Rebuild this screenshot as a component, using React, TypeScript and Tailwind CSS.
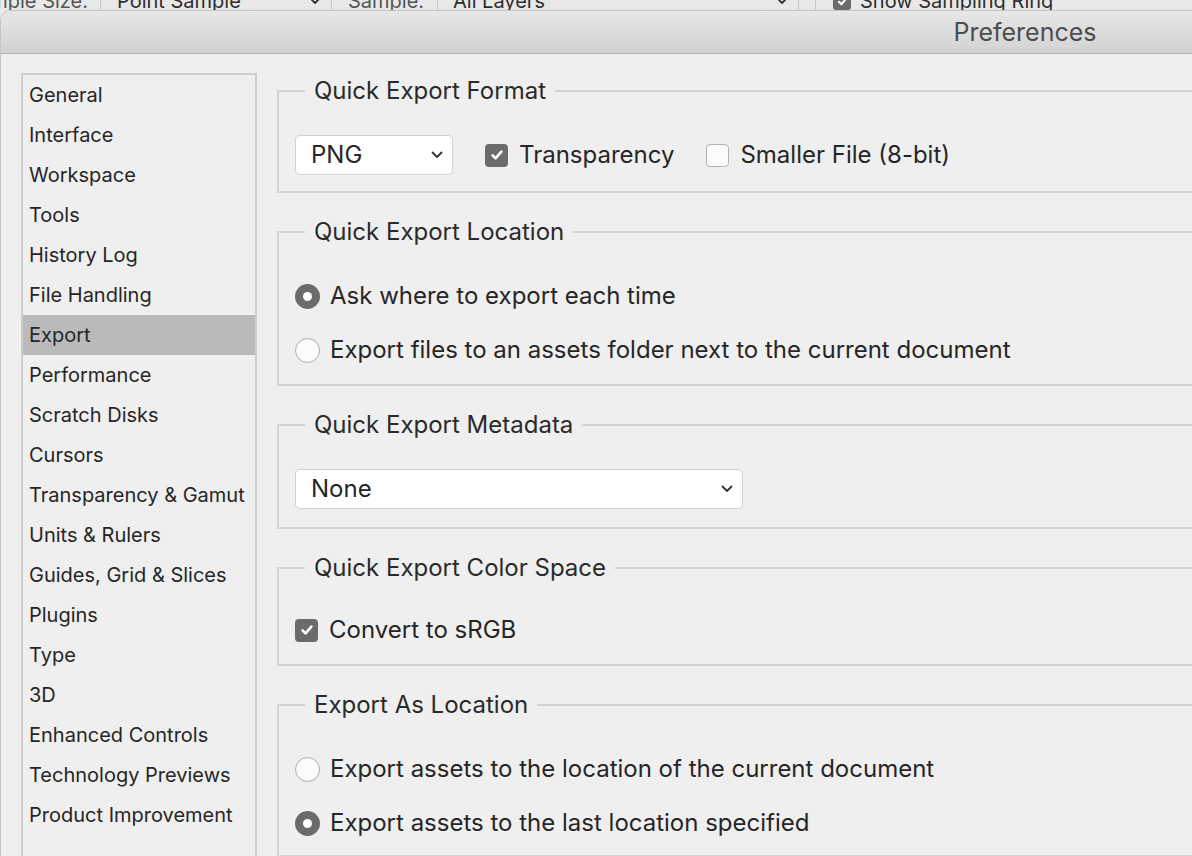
import { ReactNode } from 'react';

const SECTIONS = [
  'General',
  'Interface',
  'Workspace',
  'Tools',
  'History Log',
  'File Handling',
  'Export',
  'Performance',
  'Scratch Disks',
  'Cursors',
  'Transparency & Gamut',
  'Units & Rulers',
  'Guides, Grid & Slices',
  'Plugins',
  'Type',
  '3D',
  'Enhanced Controls',
  'Technology Previews',
  'Product Improvement',
];

function Chevron({ className = '' }: { className?: string }) {
  return (
    <svg width="12" height="8" viewBox="0 0 12 8" className={className}>
      <polyline points="1.5,1.5 6,6 10.5,1.5" fill="none" stroke="#333" strokeWidth="1.8" strokeLinecap="round" strokeLinejoin="round" />
    </svg>
  );
}

function Group({ title, children, body = 'pt-[30px] pb-[16px]' }: { title: string; children: ReactNode; body?: string }) {
  return (
    <section>
      <div className="flex h-[28px]">
        <div className="w-[28px] mt-[13px] border-t-2 border-l-2 border-[#d3d3d3]" />
        <span className="px-[9px] text-[24px] leading-[28px] text-[#2a2a2a] whitespace-nowrap">{title}</span>
        <div className="flex-1 mt-[13px] border-t-2 border-[#d3d3d3]" />
      </div>
      <div className={`border-l-2 border-b-2 border-[#d3d3d3] pl-[16px] ${body}`}>{children}</div>
    </section>
  );
}

function Select({ value, width }: { value: string; width: string }) {
  return (
    <div className={`${width} h-[40px] flex items-center justify-between bg-white border-[1.5px] border-[#d0d0d0] rounded-[5px] pl-[15px] pr-[9px]`}>
      <span className="text-[24px] text-[#262626]">{value}</span>
      <Chevron />
    </div>
  );
}

function Checkbox({ checked, label }: { checked: boolean; label: string }) {
  return (
    <div className="flex items-center gap-[11px]">
      {checked ? (
        <div className="w-[23px] h-[23px] rounded-[4px] bg-[#6b6b6b] flex items-center justify-center">
          <svg width="16" height="16" viewBox="0 0 16 16">
            <path d="M3.6 8.4 L6.6 11.4 L12.4 4.6" fill="none" stroke="white" strokeWidth="2.6" strokeLinecap="round" strokeLinejoin="round" />
          </svg>
        </div>
      ) : (
        <div className="w-[23px] h-[23px] rounded-[4px] bg-[#fbfbfb] border-[1.5px] border-[#b2b2b2]" />
      )}
      <span className="text-[24px] text-[#262626] whitespace-nowrap">{label}</span>
    </div>
  );
}

function Radio({ checked, label }: { checked: boolean; label: string }) {
  return (
    <div className="h-[40px] flex items-center gap-[10px]">
      {checked ? (
        <div className="w-[25px] h-[25px] rounded-full bg-[#6b6b6b] flex items-center justify-center">
          <div className="w-[9px] h-[9px] rounded-full bg-white" />
        </div>
      ) : (
        <div className="w-[25px] h-[25px] rounded-full bg-[#fbfbfb] border-[1.5px] border-[#ababab]" />
      )}
      <span className="text-[24px] text-[#262626] whitespace-nowrap">{label}</span>
    </div>
  );
}

export default function App() {
  return (
    <div className="w-full h-screen overflow-hidden bg-[#e8e8e8] font-[family-name:Inter,'Liberation_Sans',sans-serif]">
      {/* toolbar of the app behind the dialog */}
      <div className="h-[10px] overflow-hidden">
        <div className="-mt-[13px] h-[28px] flex items-center text-[20px] text-[#2e2e2e] whitespace-nowrap">
          <div className="w-[100px] flex justify-end pr-[12px] text-[#555]">Sample Size:</div>
          <div className="w-px h-full bg-[#c6c6c6]" />
          <div className="w-[230px] flex items-center justify-between pl-[16px] pr-[10px]">
            <span>Point Sample</span>
            <Chevron />
          </div>
          <div className="w-px h-full bg-[#c6c6c6]" />
          <div className="w-[105px] pl-[16px] text-[#555]">Sample:</div>
          <div className="w-px h-full bg-[#c6c6c6]" />
          <div className="w-[360px] flex items-center justify-between pl-[15px] pr-[10px]">
            <span>All Layers</span>
            <Chevron />
          </div>
          <div className="w-px h-full bg-[#c6c6c6]" />
          <div className="w-[16px]" />
          <div className="w-px h-full bg-[#c6c6c6]" />
          <div className="pl-[17px] flex items-center gap-[9px]">
            <div className="w-[18px] h-[18px] rounded-[3px] bg-[#6b6b6b] flex items-center justify-center">
              <svg width="13" height="13" viewBox="0 0 16 16">
                <path d="M3.6 8.4 L6.6 11.4 L12.4 4.6" fill="none" stroke="white" strokeWidth="2.6" strokeLinecap="round" strokeLinejoin="round" />
              </svg>
            </div>
            <span>Show Sampling Ring</span>
          </div>
        </div>
      </div>

      {/* dialog */}
      <div className="rounded-tl-[10px] border-t border-l border-[#c4c4c4] bg-[#efefef] h-full">
        <div className="h-[43px] rounded-tl-[10px] bg-gradient-to-b from-[#e7e7e7] to-[#d2d2d2] border-b border-[#b3b3b3] flex justify-end">
          <div className="w-[334px] text-center text-[25px] leading-[42px] text-[#4d4d4d]">Preferences</div>
        </div>

        <div className="flex items-start pt-[19px] pl-[20px]">
          <ul className="w-[236px] h-[900px] shrink-0 border-2 border-[#cecece]">
            {SECTIONS.map((s) => (
              <li
                key={s}
                className={`h-[40px] flex items-center pl-[6px] text-[20px] whitespace-nowrap text-[#262626] ${
                  s === 'Export' ? 'bg-[#bababa]' : ''
                }`}
              >
                {s}
              </li>
            ))}
          </ul>

          <div className="flex-1 ml-[20px] pt-[4px] flex flex-col gap-[25px]">
            <Group title="Quick Export Format">
              <div className="h-[40px] flex items-center">
                <Select value="PNG" width="w-[158px]" />
                <div className="ml-[32px]">
                  <Checkbox checked label="Transparency" />
                </div>
                <div className="ml-[32px]">
                  <Checkbox checked={false} label="Smaller File (8-bit)" />
                </div>
              </div>
            </Group>

            <Group title="Quick Export Location" body="pt-[30px] pb-[14px]">
              <div className="flex flex-col gap-[14px]">
                <Radio checked label="Ask where to export each time" />
                <Radio checked={false} label="Export files to an assets folder next to the current document" />
              </div>
            </Group>

            <Group title="Quick Export Metadata" body="pt-[30px] pb-[18px]">
              <Select value="None" width="w-[448px]" />
            </Group>

            <Group title="Quick Export Color Space" body="pt-[28px] pb-[14px]">
              <div className="h-[40px] flex items-center">
                <Checkbox checked label="Convert to sRGB" />
              </div>
            </Group>

            <Group title="Export As Location" body="pt-[30px] pb-[12px]">
              <div className="flex flex-col gap-[14px]">
                <Radio checked={false} label="Export assets to the location of the current document" />
                <Radio checked label="Export assets to the last location specified" />
              </div>
            </Group>
          </div>
        </div>
      </div>
    </div>
  );
}
